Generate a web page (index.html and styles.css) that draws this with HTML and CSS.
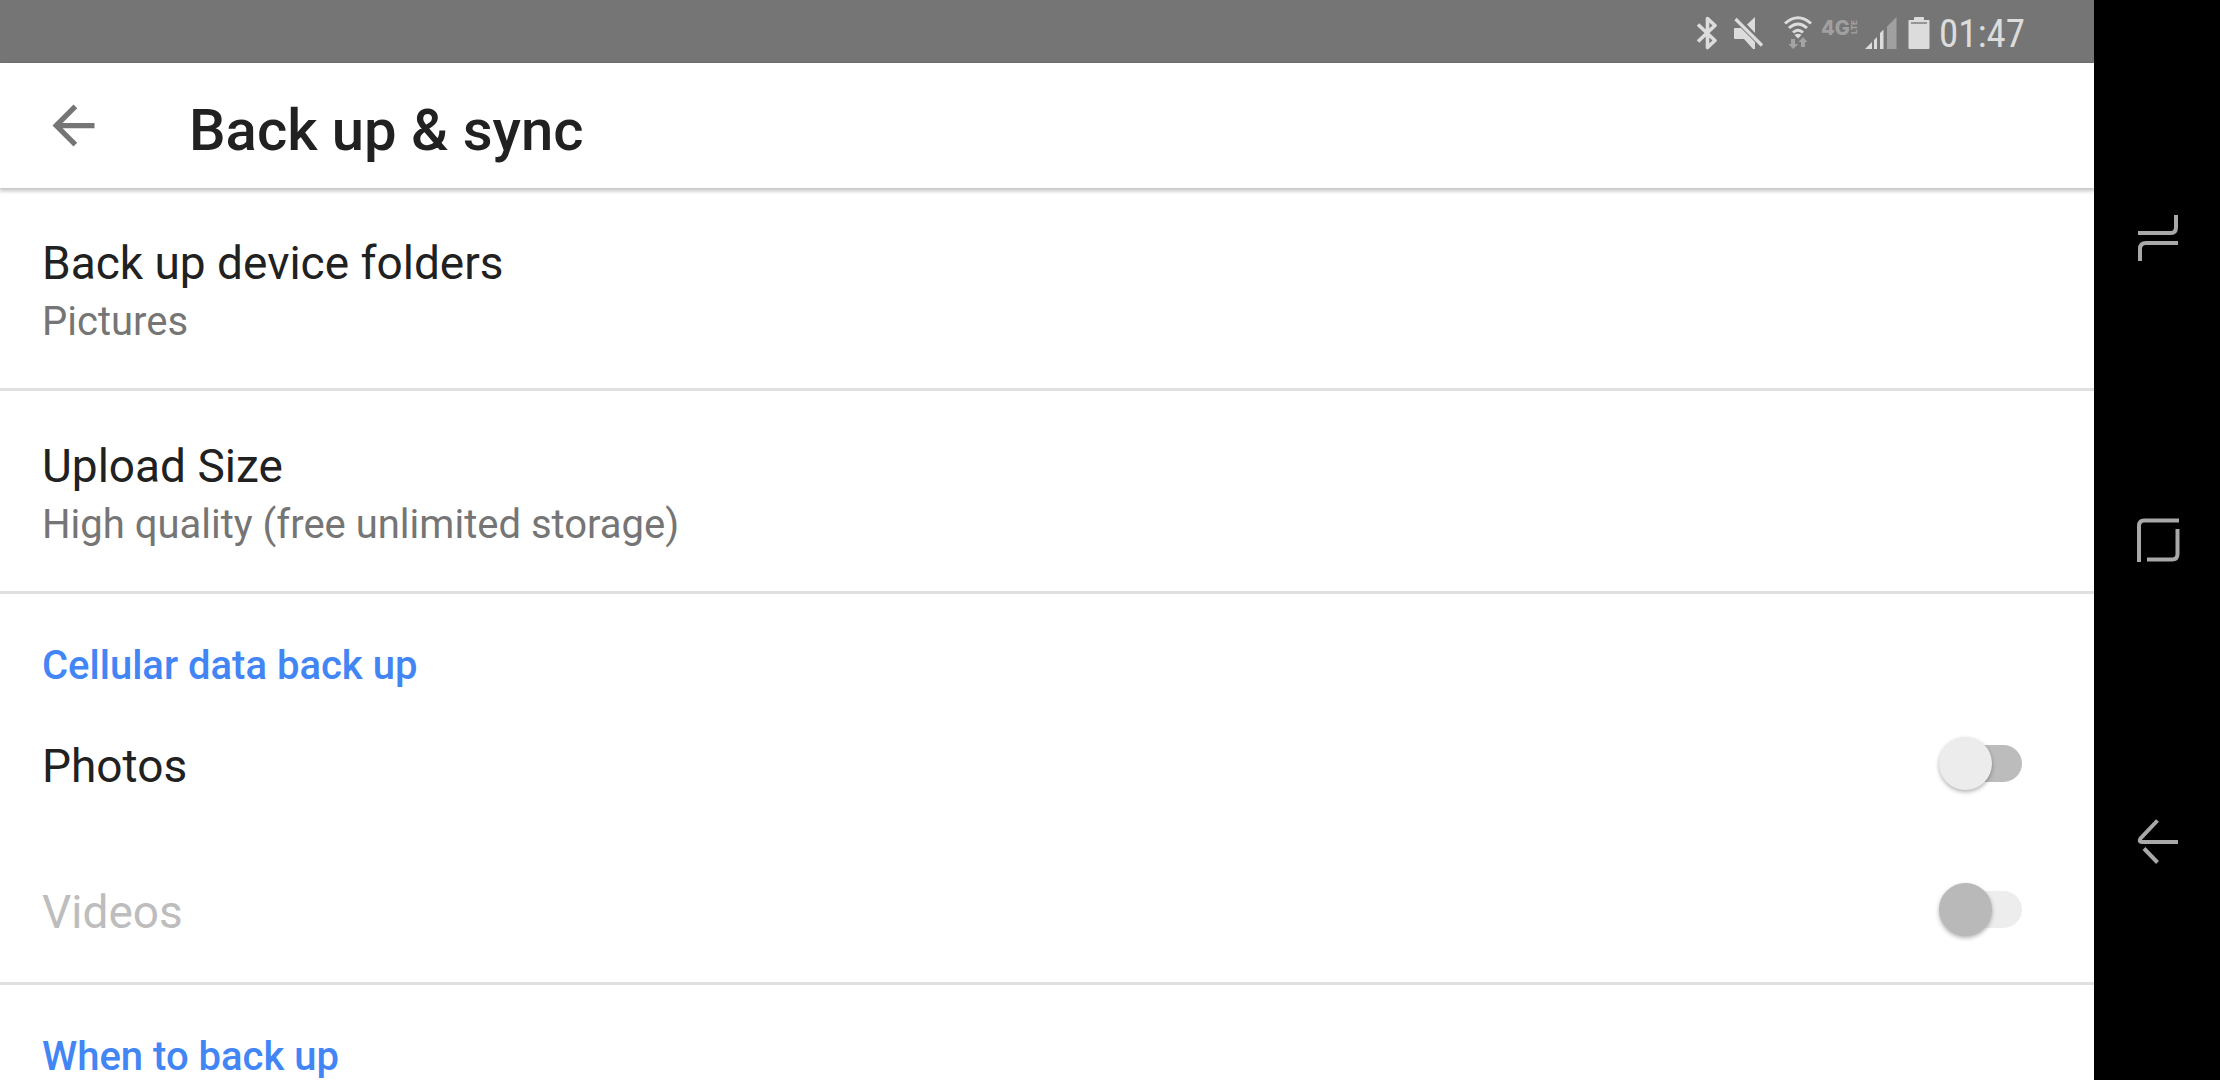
FILE: index.html
```html
<!DOCTYPE html>
<html lang="en">
<head>
<meta charset="utf-8">
<meta name="viewport" content="width=device-width, initial-scale=1">
<title>Back up &amp; sync</title>
<link rel="stylesheet" href="styles.css">
</head>
<body>
<div class="device">
  <div class="screen">
    <div class="status-bar">
      <svg class="status-icon bluetooth" width="22" height="34" viewBox="0 0 22 34" aria-label="Bluetooth">
        <path d="M2 8.500L19 24.500L11.500 31.500V2.500L19 9.500L2 25.500" fill="none" stroke="#dcdcdc" stroke-width="3.600" stroke-linejoin="round"/>
      </svg>
      <svg class="status-icon mute" width="30" height="34" viewBox="0 0 30 34" aria-label="Sound off">
        <path d="M1 12H7L21 26V33H19L10 23H1Q0 23 0 22V13Q0 12 1 12ZM13 8.500L21 1V17Z" fill="#dcdcdc"/>
        <path d="M1.500 3L28 29.500" stroke="#dcdcdc" stroke-width="3.200"/>
      </svg>
      <svg class="status-icon wifi" width="28" height="34" viewBox="0 0 28 34" aria-label="Wi-Fi">
        <path d="M1 7.500Q14 -4 27 7.500M5 12Q14 4 23 12M9 16.500Q14 12 19 16.500" fill="none" stroke="#dcdcdc" stroke-width="3"/>
        <path d="M10.500 19Q14 16.500 17.500 19L14 22.500Z" fill="#dcdcdc"/>
        <path d="M7 23H11V28H14L9 33L4.500 28H7ZM17 31V26H14.500L19 21L23.500 26H21V31Z" fill="#a3a3a3"/>
      </svg>
      <span class="network"><span class="network-gen">4G</span><span class="network-lte">LTE</span></span>
      <svg class="status-icon signal" width="32" height="34" viewBox="0 0 32 34" aria-label="Signal">
        <path d="M0 33L7 26V33ZM9 24L12 21V33H9ZM15 17L18.500 13.500V33H15Z" fill="#dcdcdc"/>
        <path d="M22 10.500L31.500 1V33H22Z" fill="#a0a0a0"/>
      </svg>
      <svg class="status-icon battery" width="22" height="34" viewBox="0 0 22 34" aria-label="Battery">
        <path d="M6 4V2Q6 1 7 1H15Q16 1 16 2V4H21Q21.500 4 21.500 5V32Q21.500 33 20.500 33H1.500Q0.500 33 0.500 32V5Q0.500 4 1 4Z" fill="#dcdcdc"/>
        <path d="M3 7H19" stroke="#969696" stroke-width="2"/>
      </svg>
      <time class="clock">01:47</time>
    </div>

    <header class="app-bar">
      <button class="icon-button" type="button" aria-label="Navigate up">
        <svg width="63" height="63" viewBox="0 0 24 24"><path d="M20 11H7.830l5.590-5.590L12 4l-8 8 8 8 1.410-1.410L7.830 13H20v-2z" fill="#757575"/></svg>
      </button>
      <h1 class="title">Back up &amp; sync</h1>
    </header>

    <main class="settings">
      <button class="entry" type="button">
        <span class="label">Back up device folders</span>
        <span class="summary">Pictures</span>
      </button>
      <button class="entry" type="button">
        <span class="label">Upload Size</span>
        <span class="summary">High quality (free unlimited storage)</span>
      </button>
      <section class="group">
        <h2 class="group-title">Cellular data back up</h2>
        <label class="toggle-row">
          <span class="label">Photos</span>
          <input class="switch" type="checkbox" role="switch">
        </label>
        <label class="toggle-row toggle-row-disabled">
          <span class="label">Videos</span>
          <input class="switch" type="checkbox" role="switch" disabled>
        </label>
      </section>
      <section class="group">
        <h2 class="group-title">When to back up</h2>
      </section>
    </main>
  </div>

  <nav class="nav-bar" aria-label="System navigation">
    <button class="nav-button" type="button" aria-label="Recent apps">
      <svg width="46" height="46" viewBox="0 0 46 46"><path d="M3 18H36Q41 18 41 12V0M43 28H11Q5 28 5 34V46" fill="none" stroke="#a8a8a8" stroke-width="4"/></svg>
    </button>
    <button class="nav-button" type="button" aria-label="Home">
      <svg width="46" height="46" viewBox="0 0 46 46"><path d="M4 45V9Q4 3.500 9 3.500H44M42.500 12V37Q42.500 42.500 37 42.500H12" fill="none" stroke="#a8a8a8" stroke-width="4"/></svg>
    </button>
    <button class="nav-button" type="button" aria-label="Back">
      <svg width="46" height="46" viewBox="0 0 46 46"><path d="M22.500 1.500L5.500 19.500Q3.500 23 7 23H43M9 29.500L22.500 43.500" fill="none" stroke="#a8a8a8" stroke-width="4"/></svg>
    </button>
  </nav>
</div>
</body>
</html>
```
FILE: styles.css
```css
* {
  box-sizing: border-box;
}

body {
  margin: 0;
  font-family: Roboto, sans-serif;
  color: #212121;
  background: #fff;
}

h1,
h2 {
  margin: 0;
  font-weight: 500;
}

button {
  margin: 0;
  border: 0;
  padding: 0;
  background: none;
  color: inherit;
  font-family: inherit;
  text-align: left;
}

svg {
  display: block;
}

.device {
  display: flex;
  height: 100vh;
}

.screen {
  flex: 1;
  min-width: 0;
  display: flex;
  flex-direction: column;
}

/* Status bar */
.status-bar {
  flex: none;
  display: flex;
  align-items: center;
  justify-content: flex-end;
  height: 63px;
  padding: 2px 69px 0 0;
  background: #757575;
  color: #dcdcdc;
}

.mute {
  margin-left: 16px;
}

.wifi {
  margin-left: 20px;
}

.network {
  display: flex;
  align-items: center;
  margin: 0 7px 10px 9px;
  color: #a0a0a0;
  font-family: Inter, sans-serif;
  font-weight: 800;
}

.network-gen {
  font-size: 20px;
  line-height: 20px;
}

.network-lte {
  font-size: 8px;
  line-height: 8px;
  writing-mode: vertical-rl;
  transform: rotate(180deg);
}

.battery {
  margin: 0 9px 0 11px;
}

.clock {
  padding-top: 2px;
  font-family: "Roboto Condensed", "Liberation Sans Narrow", Roboto, sans-serif;
  font-size: 39px;
  line-height: 46px;
}

/* App bar */
.app-bar {
  flex: none;
  display: flex;
  align-items: center;
  gap: 80px;
  height: 125px;
  padding: 0 42px;
  box-shadow: 0 2px 4px 1px rgba(0, 0, 0, 0.24);
  z-index: 1;
}

.title {
  padding: 8px 0 0 4px;
  font-size: 58px;
  line-height: 70px;
}

/* Settings list */
.settings {
  flex: 1;
  min-height: 0;
  overflow-y: auto;
  scrollbar-width: none;
}

.entry {
  display: flex;
  flex-direction: column;
  gap: 6px;
  width: 100%;
  padding: 47px 42px 42px;
  border-bottom: 3px solid #e0e0e0;
}

.label {
  font-size: 46px;
  line-height: 56px;
}

.summary {
  color: #757575;
  font-size: 40px;
  line-height: 49px;
}

.group {
  border-bottom: 3px solid #e0e0e0;
}

.group-title {
  padding: 47px 42px 0;
  color: #4285f4;
  font-size: 40px;
  line-height: 49px;
}

.toggle-row {
  display: flex;
  align-items: center;
  justify-content: space-between;
  height: 146px;
  padding: 0 72px 0 42px;
}

.toggle-row .label {
  padding-top: 5px;
}

.toggle-row-disabled {
  color: #bdbdbd;
}

.switch {
  appearance: none;
  position: relative;
  width: 83px;
  height: 53px;
  margin: 0;
}

.switch::before {
  content: "";
  position: absolute;
  inset: 8px 0 8px 8px;
  border-radius: 19px;
  background: #bcbcbc;
}

.switch::after {
  content: "";
  position: absolute;
  left: 0;
  top: 0;
  width: 53px;
  height: 53px;
  border-radius: 50%;
  background: #ececec;
  box-shadow: 0 2px 4px rgba(0, 0, 0, 0.3);
}

.switch:checked::after {
  left: 30px;
}

.switch:disabled::before {
  background: #ededed;
}

.switch:disabled::after {
  background: #b9b9b9;
}

/* System navigation */
.nav-bar {
  flex: none;
  display: flex;
  flex-direction: column;
  align-items: center;
  justify-content: center;
  gap: 176px;
  width: 126px;
  background: #000;
}

.nav-button {
  display: flex;
  align-items: center;
  justify-content: center;
  width: 126px;
  height: 126px;
  padding-left: 2px;
}
```
